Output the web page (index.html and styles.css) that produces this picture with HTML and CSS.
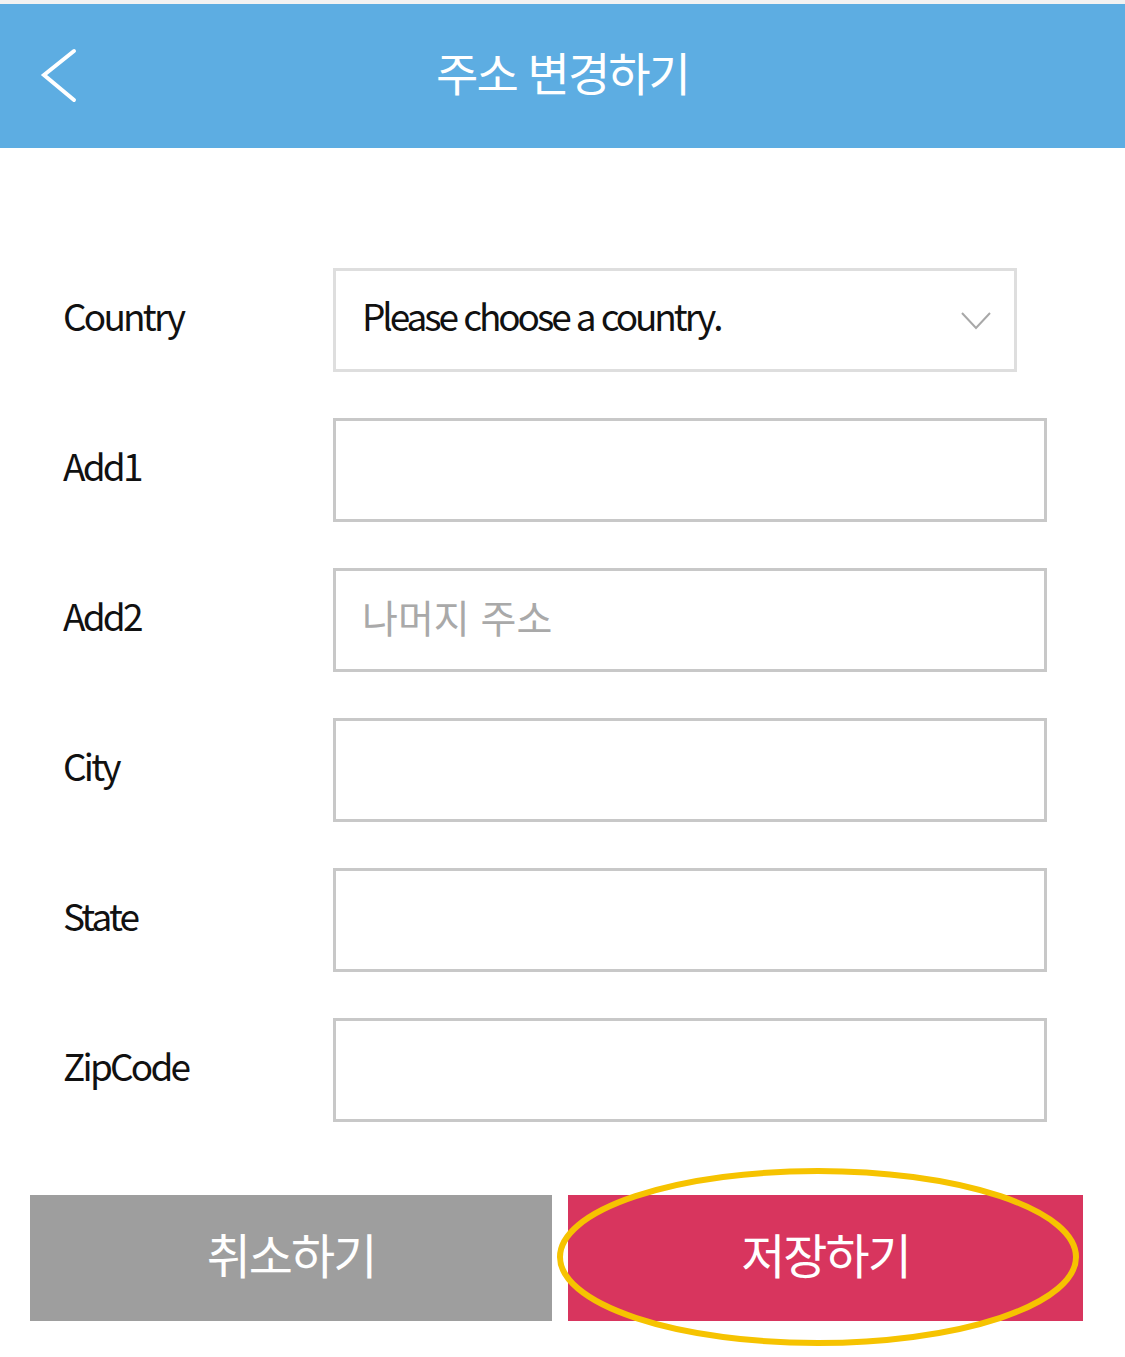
FILE: index.html
```html
<!DOCTYPE html>
<html lang="ko">
<head>
    <meta charset="UTF-8">
    <meta name="viewport" content="width=device-width, initial-scale=1.0">
    <title>주소 변경하기</title>
    <link rel="stylesheet" href="styles.css">
</head>
<body>
    <div class="top-line"></div>
    <header class="app-bar">
        <button class="back-btn" aria-label="back">
            <svg width="40" height="56" viewBox="0 0 40 56">
                <polyline points="34,3 4,27 34,52" fill="none" stroke="#ffffff" stroke-width="4" stroke-linecap="round" stroke-linejoin="miter"/>
            </svg>
        </button>
        <h1>주소 변경하기</h1>
    </header>

    <form class="address-form">
        <div class="row">
            <label class="row-label">Country</label>
            <div class="select-box">
                <span>Please choose a country.</span>
                <svg width="32" height="20" viewBox="0 0 32 20">
                    <polyline points="2,2 16,17 30,2" fill="none" stroke="#a8a8a8" stroke-width="2"/>
                </svg>
            </div>
        </div>
        <div class="row">
            <label class="row-label" for="add1">Add1</label>
            <input class="text-input" type="text" id="add1">
        </div>
        <div class="row">
            <label class="row-label" for="add2">Add2</label>
            <input class="text-input" type="text" id="add2" placeholder="나머지 주소">
        </div>
        <div class="row">
            <label class="row-label" for="city">City</label>
            <input class="text-input" type="text" id="city">
        </div>
        <div class="row">
            <label class="row-label" for="state">State</label>
            <input class="text-input" type="text" id="state">
        </div>
        <div class="row">
            <label class="row-label" for="zip">ZipCode</label>
            <input class="text-input" type="text" id="zip">
        </div>
    </form>

    <div class="actions">
        <button class="btn btn-cancel">취소하기</button>
        <div class="save-wrap">
            <button class="btn btn-save">저장하기</button>
            <svg class="highlight" width="530" height="184" viewBox="0 0 530 184">
                <ellipse cx="263" cy="92" rx="258" ry="86" fill="none" stroke="#f6c300" stroke-width="6"/>
            </svg>
        </div>
    </div>
</body>
</html>
```

FILE: styles.css
```css
html, body {
    min-height: 1357px;
}
body {
    margin: 0;
    background-color: #ffffff;
    font-family: "Noto Sans CJK KR", "Noto Sans", sans-serif;
    color: #111111;
    width: 1125px;
}
.top-line {
    height: 4px;
    background-color: #f2f2f2;
}
.app-bar {
    height: 144px;
    background-color: #5dade2;
    display: flex;
    align-items: center;
    justify-content: center;
    position: relative;
}
.back-btn {
    position: absolute;
    left: 40px;
    top: 44px;
    background: none;
    border: none;
    padding: 0;
}
.app-bar h1 {
    margin: 0 0 10px 0;
    color: #ffffff;
    font-weight: 400;
    font-size: 46px;
    letter-spacing: -2px;
}
.address-form {
    padding: 120px 0 0 0;
    display: flex;
    flex-direction: column;
    gap: 46px;
}
.row {
    display: flex;
    align-items: center;
    height: 104px;
}
.row-label {
    width: 270px;
    padding: 0 0 10px 63px;
    font-size: 37px;
    letter-spacing: -2.8px;
    color: #111111;
}
.select-box {
    border: 3px solid #dedede;
    display: flex;
    align-items: center;
    justify-content: space-between;
    padding: 0 22px 0 26px;
    box-sizing: border-box;
    height: 104px;
    width: 684px;
    font-size: 37px;
    letter-spacing: -3.1px;
}
.select-box span {
    padding-bottom: 10px;
}
.select-box svg {
    margin-top: 2px;
}
.text-input {
    width: 714px;
    height: 104px;
    box-sizing: border-box;
    border: 3px solid #c8c8c8;
    font-family: inherit;
    font-size: 39px;
    padding: 0 26px 8px 26px;
    outline: none;
}
.text-input::placeholder {
    color: #a9a9a9;
    letter-spacing: 0;
}
.actions {
    display: flex;
    gap: 16px;
    padding: 73px 0 40px 30px;
}
.btn {
    height: 126px;
    border: none;
    color: #ffffff;
    font-family: inherit;
    font-size: 48px;
    letter-spacing: -2px;
    padding: 0 0 10px 0;
}
.btn-cancel {
    width: 522px;
    background-color: #9e9e9e;
}
.save-wrap {
    position: relative;
}
.btn-save {
    width: 515px;
    background-color: #d8355e;
}
.highlight {
    position: absolute;
    left: -13px;
    top: -30px;
}
```
